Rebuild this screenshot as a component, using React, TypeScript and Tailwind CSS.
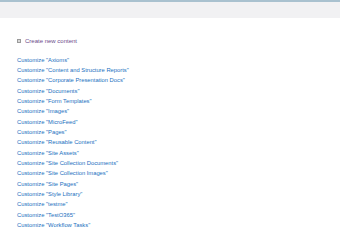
const libs = [
  'Axioms',
  'Content and Structure Reports',
  'Corporate Presentation Docs',
  'Documents',
  'Form Templates',
  'Images',
  'MicroFeed',
  'Pages',
  'Reusable Content',
  'Site Assets',
  'Site Collection Documents',
  'Site Collection Images',
  'Site Pages',
  'Style Library',
  'testme',
  'TestO365',
  'Workflow Tasks',
];

export default function App() {
  return (
    <div className="w-[340px] h-[241px] overflow-hidden bg-white" style={{ fontFamily: '"Liberation Sans", Arial, sans-serif' }}>
      {/* top bar */}
      <div className="h-[18px] border-t-2 border-[#a9c1cf] bg-[#f1f1f3]" />

      <div className="pl-[17px] pt-[18px]">
        <div className="flex items-center gap-[4px] h-[10px] text-[6px] text-[#6b4a8a]">
          <span className="w-[4px] h-[4px] border border-[#9a9a9a] bg-[#d8d8d8]" />
          <span>Create new content</span>
        </div>

        <ul className="mt-[8.5px] flex flex-col">
          {libs.map((name) => (
            <li key={name} className="h-[10.35px] leading-[10.35px] text-[5.8px] text-[#1a6fc0] whitespace-nowrap">
              Customize "{name}"
            </li>
          ))}
        </ul>
      </div>
    </div>
  );
}
